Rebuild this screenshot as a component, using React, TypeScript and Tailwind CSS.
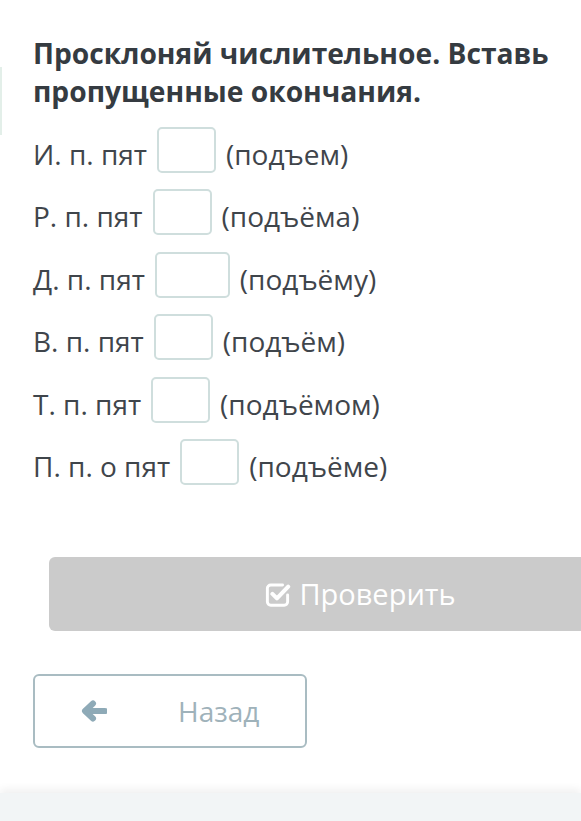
import React from "react";

const rows: { label: string; hint: string; wide?: boolean }[] = [
  { label: "И. п. пят", hint: "(подъем)" },
  { label: "Р. п. пят", hint: "(подъёма)" },
  { label: "Д. п. пят", hint: "(подъёму)", wide: true },
  { label: "В. п. пят", hint: "(подъём)" },
  { label: "Т. п. пят", hint: "(подъёмом)" },
  { label: "П. п. о пят", hint: "(подъёме)" },
];

function CheckSquare() {
  return (
    <svg width="27" height="27" viewBox="0 0 24 24" fill="none" className="shrink-0">
      <path
        d="M16.5 3.5H6A3 3 0 0 0 3 6.5v12a3 3 0 0 0 3 3h12a3 3 0 0 0 3-3v-6"
        stroke="white"
        strokeWidth="2.6"
        strokeLinecap="round"
      />
      <path
        d="M7.5 11.5l4 4L21.5 5"
        stroke="white"
        strokeWidth="3.6"
        strokeLinecap="round"
        strokeLinejoin="round"
      />
    </svg>
  );
}

function ArrowLeft() {
  return (
    <svg width="26" height="22" viewBox="0 0 26 22" fill="none" className="shrink-0">
      <path d="M24 11H5" stroke="#8eaab7" strokeWidth="6" strokeLinecap="round" />
      <path
        d="M12 3.5L4 11l8 7.5"
        stroke="#8eaab7"
        strokeWidth="6"
        strokeLinecap="round"
        strokeLinejoin="round"
      />
    </svg>
  );
}

export default function App() {
  return (
    <div
      className="w-full min-h-[821px] overflow-hidden bg-white flex flex-col relative"
      style={{ fontFamily: '"Open Sans", "Noto Sans", sans-serif' }}
    >
      <div className="absolute left-0 top-[67px] h-[68px] w-[2px] bg-[#e3efe9]" />
      <div className="pl-[33px] pt-[34px]">
        <h1 className="text-[28.2px] font-bold leading-[38px] text-[#353b41] m-0">
          Просклоняй числительное. Вставь
          <br />
          пропущенные окончания.
        </h1>
        <div className="mt-[8.8px] flex flex-col">
          {rows.map((r) => (
            <div key={r.label} className="h-[62.4px] flex items-center text-[28px] text-[#3f454b]">
              <span className="whitespace-pre mt-[8px]">{r.label}</span>
              <span
                className={`mx-[10px] h-[46px] rounded-[5px] border-2 border-[#cfdedd] bg-white shrink-0 ${
                  r.wide ? "w-[75px]" : "w-[59px]"
                }`}
              />
              <span className="whitespace-pre mt-[8px]">{r.hint}</span>
            </div>
          ))}
        </div>
        <div className="mt-[64px] ml-[16px] w-[622px] h-[74px] rounded-[6px] bg-[#cbcbcb] flex items-center justify-center gap-[8px] text-white text-[29px]">
          <CheckSquare />
          <span>Проверить</span>
        </div>
        <div className="mt-[43px] w-[274px] h-[74px] rounded-[6px] border-2 border-[#a9bcc2] flex items-center pl-[46px]">
          <ArrowLeft />
          <span className="ml-[71px] text-[28px] text-[#9fb2ba]">Назад</span>
        </div>
      </div>
      <div className="mt-[45px] h-[28px] w-full bg-[#f2f5f6] shadow-[0_-4px_8px_rgba(0,0,0,0.06)] flex-1" />
    </div>
  );
}
